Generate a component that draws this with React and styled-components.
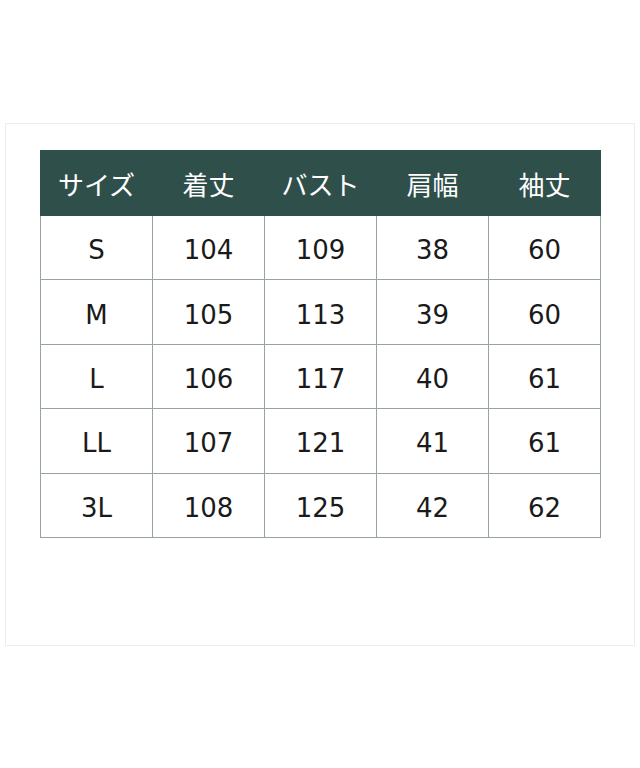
import React from 'react'
import styled, { createGlobalStyle } from 'styled-components'

const GlobalStyle = createGlobalStyle`
   body {
      margin: 0;
      background: #fff;
      font-family: 'DejaVu Sans', 'Noto Sans CJK JP', sans-serif;
   }
`

const headers = ['サイズ', '着丈', 'バスト', '肩幅', '袖丈']
const rows = [
   ['S', 104, 109, 38, 60],
   ['M', 105, 113, 39, 60],
   ['L', 106, 117, 40, 61],
   ['LL', 107, 121, 41, 61],
   ['3L', 108, 125, 42, 62],
]

const App = () => {
   return (
      <Page>
         <GlobalStyle />
         <Frame>
            <SizeTable>
               <thead>
                  <tr>
                     {headers.map((h) => (
                        <HeadCell key={h}>{h}</HeadCell>
                     ))}
                  </tr>
               </thead>
               <tbody>
                  {rows.map((row) => (
                     <tr key={row[0]}>
                        {row.map((v, i) => (
                           <Cell key={i}>{v}</Cell>
                        ))}
                     </tr>
                  ))}
               </tbody>
            </SizeTable>
         </Frame>
      </Page>
   )
}

export default App

const Page = styled('div')({
   width: '640px',
   height: '768px',
   paddingTop: '123px',
   boxSizing: 'border-box',
})

const Frame = styled('div')({
   margin: '0 5px',
   height: '523px',
   border: '1px solid #ececec',
   boxSizing: 'border-box',
   padding: '26px 34px 0',
})

const SizeTable = styled('table')({
   width: '561px',
   borderCollapse: 'collapse',
   tableLayout: 'fixed',
   color: '#1a1a1a',
})

const HeadCell = styled('th')({
   height: '64px',
   padding: 0,
   background: '#2f4f4b',
   color: '#fff',
   fontWeight: 400,
   fontSize: '26px',
   fontFamily: "'Noto Sans CJK JP', sans-serif",
   textAlign: 'center',
   verticalAlign: 'middle',
   border: '1px solid #2f4f4b',
})

const Cell = styled('td')({
   height: '58.4px',
   padding: '5px 0 0',
   fontSize: '26px',
   textAlign: 'center',
   verticalAlign: 'middle',
   border: '1px solid #98a29f',
})
